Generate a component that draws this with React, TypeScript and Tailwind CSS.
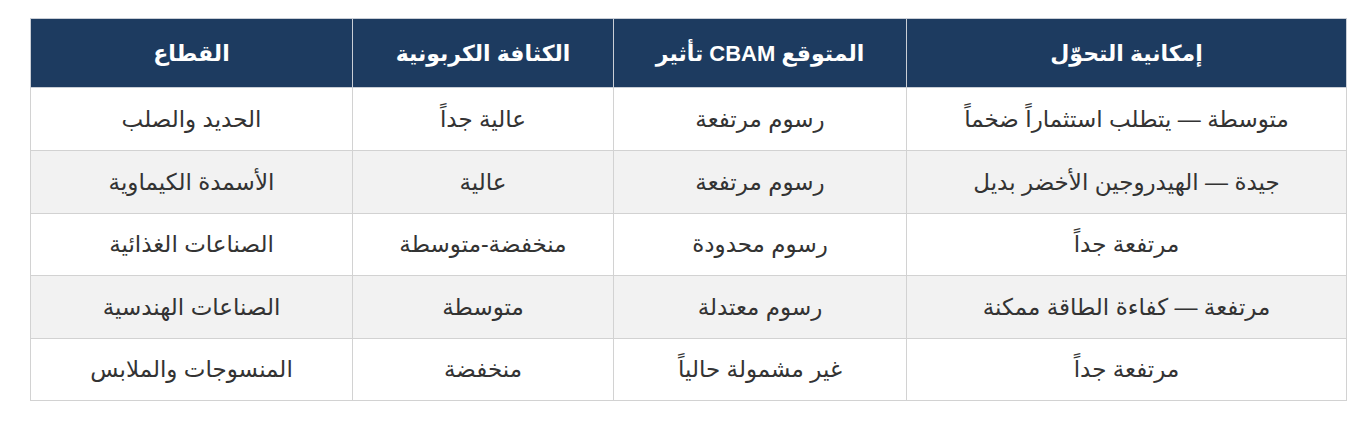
const headers = ["القطاع", "الكثافة الكربونية", "تأثير CBAM المتوقع", "إمكانية التحوّل"];

const rows = [
  ["الحديد والصلب", "عالية جداً", "رسوم مرتفعة", "متوسطة — يتطلب استثماراً ضخماً"],
  ["الأسمدة الكيماوية", "عالية", "رسوم مرتفعة", "جيدة — الهيدروجين الأخضر بديل"],
  ["الصناعات الغذائية", "منخفضة-متوسطة", "رسوم محدودة", "مرتفعة جداً"],
  ["الصناعات الهندسية", "متوسطة", "رسوم معتدلة", "مرتفعة — كفاءة الطاقة ممكنة"],
  ["المنسوجات والملابس", "منخفضة", "غير مشمولة حالياً", "مرتفعة جداً"],
];

const widths = ["w-[322px]", "w-[261px]", "w-[293px]", "w-[440px]"];
// row heights alternate slightly so the grid lines land on the reference pixels
const heights = ["h-[63px]", "h-[63px]", "h-[62px]", "h-[63px]", "h-[62px]"];

const App = () => {
  return (
    <div className="w-full min-h-[440px] bg-white pt-[18px] pl-[30px] font-['Liberation_Sans','DejaVu_Sans',sans-serif]">
      <table className="w-[1316px] border-collapse table-fixed">
        <thead>
          <tr className="h-[69px] bg-[#1d3b60]">
            {headers.map((h, i) => (
              <th
                key={h}
                className={`${widths[i]} border border-[#c9ced6] text-center text-[22px] font-bold text-white`}
              >
                {h}
              </th>
            ))}
          </tr>
        </thead>
        <tbody>
          {rows.map((row, r) => (
            <tr key={r} className={`${heights[r]} ${r % 2 === 1 ? "bg-[#f2f2f2]" : "bg-white"}`}>
              {row.map((cell, c) => (
                <td key={c} className="border border-[#d2d2d2] text-center text-[23px] text-[#333333]">
                  {cell}
                </td>
              ))}
            </tr>
          ))}
        </tbody>
      </table>
    </div>
  );
};

export default App;
